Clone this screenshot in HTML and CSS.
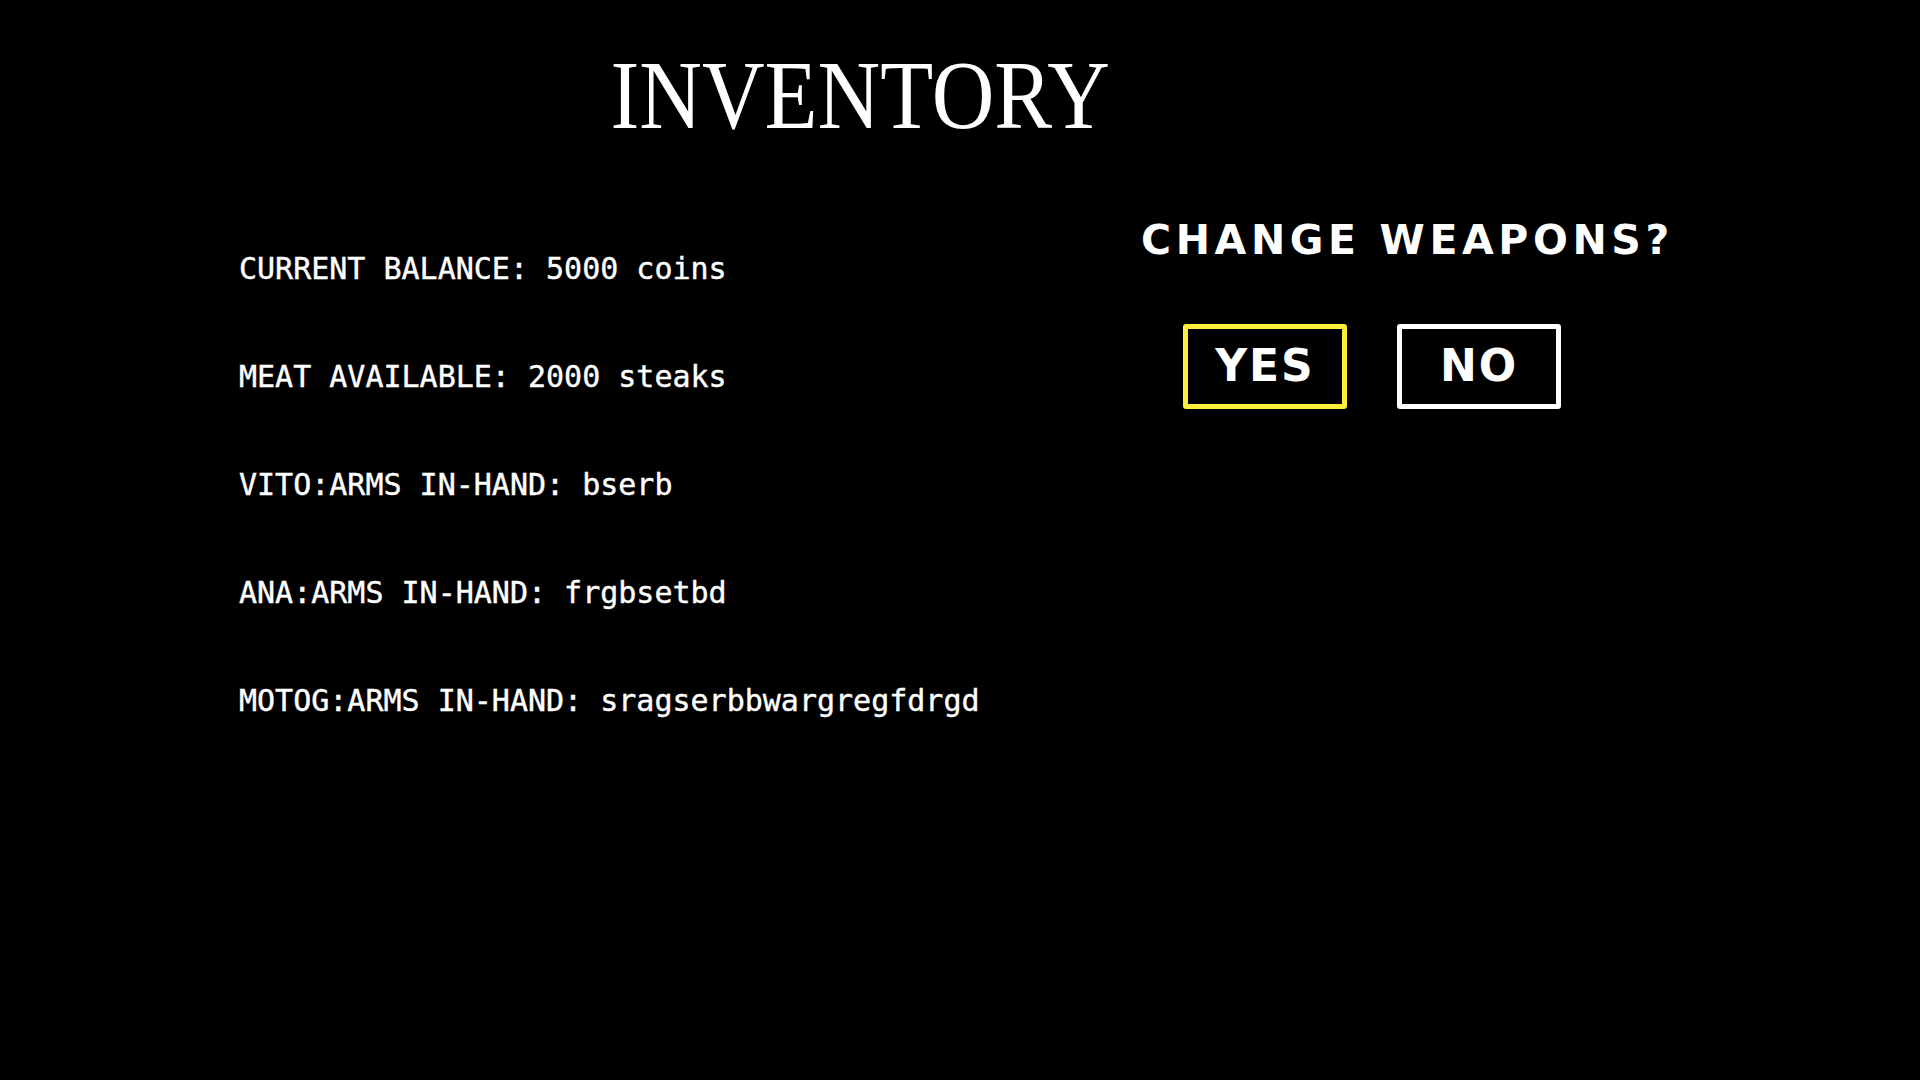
FILE: index.html
```html
<!DOCTYPE html>
<html lang="en">
<head>
<meta charset="utf-8">
<title>Inventory</title>
<link rel="stylesheet" href="styles.css">
</head>
<body>
<div class="screen">
  <header class="header">
    <h1 class="title">INVENTORY</h1>
  </header>
  <main class="main">
    <section class="stats">
      <p class="row">CURRENT BALANCE: 5000 coins</p>
      <p class="row">MEAT AVAILABLE: 2000 steaks</p>
      <p class="row">VITO:ARMS IN-HAND: bserb</p>
      <p class="row">ANA:ARMS IN-HAND: frgbsetbd</p>
      <p class="row">MOTOG:ARMS IN-HAND: sragserbbwargregfdrgd</p>
    </section>
    <section class="prompt">
      <h2 class="question">CHANGE WEAPONS?</h2>
      <div class="choices">
        <button class="choice choice-selected">YES</button>
        <button class="choice">NO</button>
      </div>
    </section>
  </main>
</div>
</body>
</html>
```
FILE: styles.css
```css
html, body {
  margin: 0;
  padding: 0;
  background: #000;
  color: #fff;
}
.screen {
  width: 1920px;
  height: 1080px;
  background: #000;
  overflow: hidden;
}
.header {
  width: 1720px;
  padding-top: 46px;
  text-align: center;
}
.title {
  display: inline-block;
  margin: 0;
  font-family: "Liberation Serif", "Times New Roman", serif;
  font-weight: normal;
  font-size: 98px;
  line-height: 98px;
  height: 98px;
  transform: scaleX(0.885);
  color: #fff;
}
.main {
  display: flex;
  flex-direction: row;
}
.stats {
  box-sizing: border-box;
  width: 1141px;
  padding-left: 239px;
  padding-top: 71px;
}
.row {
  margin: 0;
  font-family: "DejaVu Sans Mono", "Liberation Mono", monospace;
  font-size: 30px;
  line-height: 108px;
  height: 108px;
  white-space: nowrap;
  color: #fff;
  -webkit-text-stroke: 0.4px #fff;
}
.prompt {
  display: flex;
  flex-direction: column;
  align-items: flex-start;
  padding-top: 76px;
}
.question {
  margin: 0;
  font-family: "DejaVu Sans", "Verdana", sans-serif;
  font-weight: bold;
  font-size: 41px;
  line-height: 41px;
  letter-spacing: 4.6px;
  white-space: nowrap;
  color: #fff;
}
.choices {
  display: flex;
  gap: 50px;
  margin-top: 63px;
  margin-left: 42px;
}
.choice {
  box-sizing: border-box;
  width: 164px;
  height: 85px;
  display: flex;
  align-items: center;
  justify-content: center;
  padding: 0 0 2px 0;
  background: #000;
  border: 5px solid #fff;
  border-radius: 3px;
  font-family: "DejaVu Sans", "Verdana", sans-serif;
  font-weight: bold;
  font-size: 44px;
  line-height: 44px;
  letter-spacing: 2px;
  color: #fff;
}
.choice-selected {
  border-color: #fdee3a;
}
```
